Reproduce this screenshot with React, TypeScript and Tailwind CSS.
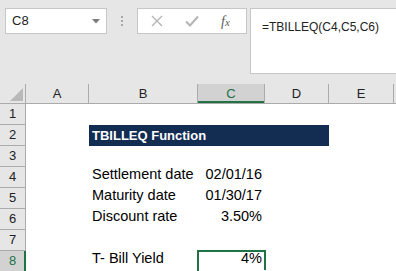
import React from 'react';

const cols = [
  { key: 'A', w: 'w-[63px]' },
  { key: 'B', w: 'w-[109px]' },
  { key: 'C', w: 'w-[67px]' },
  { key: 'D', w: 'w-[64px]' },
  { key: 'E', w: 'w-[65px]' },
];

const rows: { n: number; label?: string; value?: string; title?: boolean }[] = [
  { n: 1 },
  { n: 2, title: true },
  { n: 3 },
  { n: 4, label: 'Settlement date', value: '02/01/16' },
  { n: 5, label: 'Maturity date', value: '01/30/17' },
  { n: 6, label: 'Discount rate', value: '3.50%' },
  { n: 7 },
  { n: 8, label: 'T- Bill Yield', value: '4%' },
];

const FormulaBar: React.FC = () => (
  <div className="flex h-[84px] items-start bg-[#e6e6e6] pt-[8px]">
    <div className="ml-[5px] flex h-[26px] w-[102px] items-center justify-between border border-[#c6c6c6] bg-white pl-[6px] pr-[6px]">
      <span className="text-[13px] text-[#222]">C8</span>
      <svg width="8" height="5" viewBox="0 0 8 5">
        <path d="M0 0h8L4 4.5z" fill="#7a7a7a" />
      </svg>
    </div>
    <div className="mx-[14px] mt-[8px] flex flex-col gap-[2px]">
      <div className="h-[2px] w-[2px] bg-[#a8a8a8]" />
      <div className="h-[2px] w-[2px] bg-[#a8a8a8]" />
      <div className="h-[2px] w-[2px] bg-[#a8a8a8]" />
    </div>
    <div className="flex h-[26px] w-[110px] items-center border border-[#c6c6c6] bg-white">
      <svg className="ml-[13px]" width="12" height="12" viewBox="0 0 12 12">
        <path d="M1 1l10 10M11 1L1 11" stroke="#b4b4b4" strokeWidth="1.3" fill="none" />
      </svg>
      <svg className="ml-[22px]" width="14" height="12" viewBox="0 0 14 12">
        <path d="M1 6.5l4 4L13 1.5" stroke="#b4b4b4" strokeWidth="2" fill="none" />
      </svg>
      <span className="ml-[22px] font-['Liberation_Serif',serif] text-[14px] italic text-[#5c5c5c]">
        f<span className="text-[11px]">x</span>
      </span>
    </div>
    <div className="ml-[3px] h-[66px] flex-1 border border-r-0 border-[#c6c6c6] bg-white pl-[11px] pt-[5px]">
      <span className="text-[12px] text-[#222]">=TBILLEQ(C4,C5,C6)</span>
    </div>
  </div>
);

const App: React.FC = () => {
  return (
    <div className="h-[271px] w-[396px] overflow-hidden bg-white font-['Liberation_Sans',Arial,sans-serif]">
      <FormulaBar />

      <div className="flex h-[20px] border-b border-[#ababab] bg-[#e6e6e6]">
        <div className="relative w-[26px] border-r border-[#ababab]">
          <svg className="absolute bottom-[2px] right-[2px]" width="13" height="13" viewBox="0 0 13 13">
            <path d="M13 0v13H0z" fill="#b9b9b9" />
          </svg>
        </div>
        {cols.map((c) => (
          <div
            key={c.key}
            className={`${c.w} flex items-center justify-center border-r text-[13px] ${
              c.key === 'C'
                ? 'border-[#ababab] bg-[#d2d2d2] text-[#217346] shadow-[inset_0_-2px_0_#217346]'
                : 'border-[#ababab] text-[#222]'
            }`}
          >
            {c.key}
          </div>
        ))}
        <div className="flex-1" />
      </div>

      {rows.map((r) => (
        <div key={r.n} className="flex h-[21px]">
          <div
            className={`flex w-[26px] items-center justify-center border-b border-r text-[13px] ${
              r.n === 8
                ? 'border-b-[#ababab] border-r-[#217346] border-r-2 bg-[#d2d2d2] text-[#217346] pl-[1px]'
                : 'border-[#ababab] bg-[#e6e6e6] text-[#222]'
            }`}
          >
            {r.n}
          </div>
          <div className="w-[63px]" />
          {r.title ? (
            <div className="flex h-[21px] w-[240px] items-center bg-[#132c52] pl-[3px] text-[13px] font-bold text-white">
              TBILLEQ Function
            </div>
          ) : (
            <>
              <div className="flex w-[109px] items-end pb-[2px] pl-[3px] text-[14.5px] text-black">
                {r.label}
              </div>
              <div className="relative flex w-[67px] items-end justify-end pb-[2px] pr-[3px] text-[14.5px] text-black">
                {r.value}
                {r.n === 8 && (
                  <>
                    <div className="absolute -left-[1px] -right-[1px] -top-[1px] h-[24px] border-2 border-[#217346]" />
                    <div className="absolute -bottom-[4px] -right-[3px] h-[6px] w-[6px] border border-white bg-[#217346]" />
                  </>
                )}
              </div>
            </>
          )}
        </div>
      ))}
    </div>
  );
};

export default App;
